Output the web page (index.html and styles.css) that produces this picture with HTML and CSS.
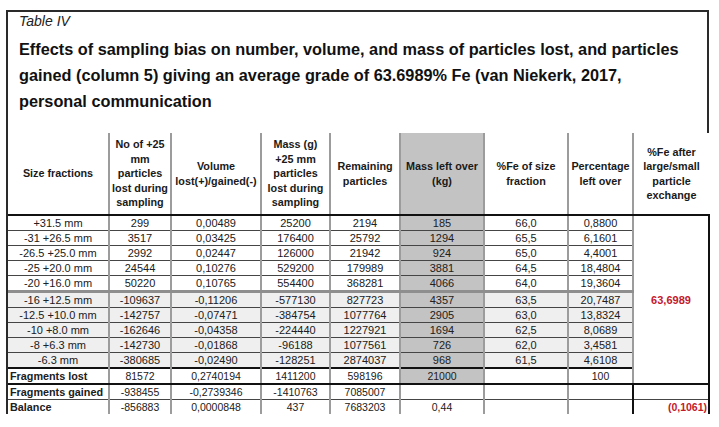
FILE: index.html
```html
<!DOCTYPE html>
<html>
<head>
<meta charset="utf-8">
<link rel="stylesheet" href="styles.css">
</head>
<body>
<div class="frame">
  <div class="caption">
    <div class="label">Table IV</div>
    <div class="title">Effects of sampling bias on number, volume, and mass of particles lost, and particles<br>gained (column 5) giving an average grade of 63.6989% Fe (van Niekerk, 2017,<br>personal communication</div>
  </div>
  <table class="data">
    <colgroup>
      <col class="w1"><col class="w2"><col class="w3"><col class="w4"><col class="w5"><col class="w6"><col class="w7"><col class="w8"><col class="w9">
    </colgroup>
    <thead>
      <tr>
        <th class="first">Size fractions</th>
        <th>No of +25<br>mm<br>particles<br>lost during<br>sampling</th>
        <th>Volume<br>lost(+)/gained(-)</th>
        <th>Mass (g)<br>+25 mm<br>particles<br>lost during<br>sampling</th>
        <th>Remaining<br>particles</th>
        <th class="g">Mass left over<br>(kg)</th>
        <th>%Fe of size<br>fraction</th>
        <th>Percentage<br>left over</th>
        <th class="last">%Fe after<br>large/small<br>particle<br>exchange</th>
      </tr>
    </thead>
    <tbody>
      <tr>
        <td class="first">+31.5 mm</td><td>299</td><td>0,00489</td><td>25200</td><td>2194</td><td class="g">185</td><td>66,0</td><td>0,8800</td>
        <td class="merged" rowspan="11">63,6989</td>
      </tr>
      <tr><td class="first">-31 +26.5 mm</td><td>3517</td><td>0,03425</td><td>176400</td><td>25792</td><td class="g">1294</td><td>65,5</td><td>6,1601</td></tr>
      <tr><td class="first">-26.5 +25.0 mm</td><td>2992</td><td>0,02447</td><td>126000</td><td>21942</td><td class="g">924</td><td>65,0</td><td>4,4001</td></tr>
      <tr><td class="first">-25 +20.0 mm</td><td>24544</td><td>0,10276</td><td>529200</td><td>179989</td><td class="g">3881</td><td>64,5</td><td>18,4804</td></tr>
      <tr><td class="first">-20 +16.0 mm</td><td>50220</td><td>0,10765</td><td>554400</td><td>368281</td><td class="g">4066</td><td>64,0</td><td>19,3604</td></tr>
      <tr class="shade sep"><td class="first">-16 +12.5 mm</td><td>-109637</td><td>-0,11206</td><td>-577130</td><td>827723</td><td class="g">4357</td><td>63,5</td><td>20,7487</td></tr>
      <tr class="shade"><td class="first">-12.5 +10.0 mm</td><td>-142757</td><td>-0,07471</td><td>-384754</td><td>1077764</td><td class="g">2905</td><td>63,0</td><td>13,8324</td></tr>
      <tr class="shade"><td class="first">-10 +8.0 mm</td><td>-162646</td><td>-0,04358</td><td>-224440</td><td>1227921</td><td class="g">1694</td><td>62,5</td><td>8,0689</td></tr>
      <tr class="shade"><td class="first">-8 +6.3 mm</td><td>-142730</td><td>-0,01868</td><td>-96188</td><td>1077561</td><td class="g">726</td><td>62,0</td><td>3,4581</td></tr>
      <tr class="shade"><td class="first">-6.3 mm</td><td>-380685</td><td>-0,02490</td><td>-128251</td><td>2874037</td><td class="g">968</td><td>61,5</td><td>4,6108</td></tr>
      <tr class="lost sum"><td class="first">Fragments lost</td><td>81572</td><td>0,2740194</td><td>1411200</td><td>598196</td><td class="g">21000</td><td></td><td class="edge">100</td></tr>
      <tr class="gained sum"><td class="first">Fragments gained</td><td>-938455</td><td>-0,2739346</td><td>-1410763</td><td>7085007</td><td></td><td></td><td class="edge"></td><td class="tail"></td></tr>
      <tr class="balance sum"><td class="first">Balance</td><td>-856883</td><td>0,0000848</td><td>437</td><td>7683203</td><td>0,44</td><td></td><td class="edge"></td><td class="tail red">(0,1061)</td></tr>
    </tbody>
  </table>
</div>
</body>
</html>
```
FILE: styles.css
```css
body {
  margin: 0;
  background: #ffffff;
  font-family: "Liberation Sans", Arial, sans-serif;
  color: #1c1c1c;
}

.frame {
  margin: 10px 0 0 6px;
  width: 701px;
  border-top: 2px solid #2a2a2a;
  border-left: 2px solid #2a2a2a;
}

.caption {
  border-right: 2px solid #2a2a2a;
  padding: 0 0 19px 11px;
}

.label {
  font-style: italic;
  font-size: 14px;
  line-height: 18px;
  color: #222;
}

.title {
  margin-top: 6px;
  font-weight: bold;
  font-size: 16.3px;
  line-height: 26px;
  color: #111;
}

.data {
  width: 701px;
  table-layout: fixed;
  border-collapse: collapse;
  font-size: 11px;
}

.w1 { width: 101px; }
.w2 { width: 62px; }
.w3 { width: 90px; }
.w4 { width: 69px; }
.w5 { width: 70px; }
.w6 { width: 84px; }
.w7 { width: 84px; }
.w8 { width: 65px; }
.w9 { width: 76px; }

.data th {
  height: 81px;
  padding: 0;
  font-size: 10.8px;
  line-height: 14.5px;
  font-weight: bold;
  text-align: center;
  vertical-align: middle;
  color: #1a1a1a;
  border-left: 2px solid #9c9c9c;
  border-bottom: 2px solid #111;
}

.data th.first { border-left: none; }

.data td {
  height: 14px;
  padding: 0;
  line-height: 14px;
  text-align: center;
  white-space: nowrap;
  border-left: 2px solid #9c9c9c;
  border-bottom: 1px solid #454545;
  color: #202020;
}

.data td.first { border-left: none; }

.data .g { background: #c3c3c3; }

.shade td { background: #efefef; }
.shade td.g { background: #c3c3c3; }

.sep td { border-top: 3px solid #8e8e8e; }

.data td.merged {
  background: #ffffff;
  color: #c4182b;
  font-weight: bold;
  border-right: 2px solid #111;
  border-bottom: 2px solid #111;
}

.lost td { border-top: 2px solid #111; border-bottom: 2px solid #111; }

.sum td.first {
  text-align: left;
  padding-left: 2px;
  font-weight: bold;
  font-size: 10.8px;
}

.sum td { font-size: 10.5px; }

.data td.edge { border-right: 2px solid #111; }
.data td.tail { border-right: 2px solid #111; }

.balance td { border-bottom: none; }

.data td.red {
  color: #c4182b;
  font-weight: bold;
  text-align: right;
  padding-right: 1px;
}
```
